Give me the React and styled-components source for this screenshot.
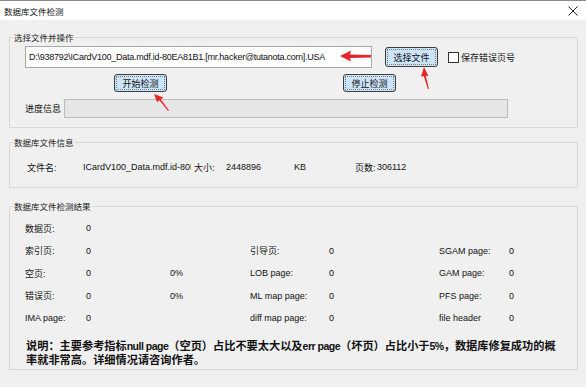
import React from 'react';
import styled, { createGlobalStyle } from 'styled-components';

const GlobalStyle = createGlobalStyle`
  html, body {
    margin: 0;
    padding: 0;
    background: #f0f0f0;
  }
  body {
    font-family: "Liberation Sans", "Noto Sans CJK SC", sans-serif;
    font-size: 9px;
    color: #111;
  }
`;

const Window = styled.div`
  position: relative;
  width: 586px;
  height: 387px;
  background: #f0f0f0;
  overflow: hidden;
  box-sizing: border-box;
`;

const TitleBar = styled.div`
  height: 20px;
  background: #fff;
  border-top: 1px solid #8a8a8a;
  box-sizing: border-box;
  display: flex;
  align-items: center;
  justify-content: space-between;
  padding: 1px 8px 0 4px;
  font-family: "Noto Sans CJK SC", sans-serif;
  font-size: 8.5px;
`;

const CloseIcon = () => (
  <svg width="10" height="10" viewBox="0 0 10 10">
    <path d="M0.5 0.5 L9.5 9.5 M9.5 0.5 L0.5 9.5" stroke="#222" strokeWidth="1" />
  </svg>
);

const Body = styled.div`
  padding: 10px 8px 0 9px;
  display: flex;
  flex-direction: column;
`;

const Group = styled.fieldset`
  margin: ${(p) => p.$top || 0}px 0 0 0;
  padding: ${(p) => p.$pt}px 0 ${(p) => p.$pb}px 0;
  border: 1px solid #d8d8d8;
  min-width: 0;
  box-sizing: border-box;
`;

const Legend = styled.legend`
  padding: 0 1px;
  margin-left: 3px;
  font-size: 8.5px;
  line-height: 14px;
  color: #222;
  font-family: "Noto Sans CJK SC", sans-serif;
`;

const Inner = styled.div`
  padding-left: ${(p) => p.$pl}px;
`;

const Row = styled.div`
  display: flex;
  align-items: center;
  height: ${(p) => p.$h}px;
  margin-top: ${(p) => p.$mt || 0}px;
  padding-left: ${(p) => p.$pl || 0}px;
`;

const PathInput = styled.div`
  width: 347px;
  height: 22px;
  box-sizing: border-box;
  background: #fff;
  border: 1px solid #a8a8a8;
  display: flex;
  align-items: center;
  padding-left: 3px;
  font-size: 9px;
  letter-spacing: -0.25px;
  white-space: nowrap;
  overflow: hidden;
`;

const Button = styled.div`
  width: ${(p) => p.$w || 53}px;
  height: ${(p) => p.$h || 18}px;
  box-sizing: border-box;
  background: #cce4f7;
  border: 1px solid #3c3c3c;
  border-radius: 3px;
  outline: 1px dotted #7a7a7a;
  outline-offset: -3px;
  display: flex;
  align-items: center;
  justify-content: center;
  margin-left: ${(p) => p.$ml || 0}px;
`;

const CheckLabel = styled.label`
  display: flex;
  align-items: center;
  gap: 2px;
  margin-left: 10px;
`;

const Box = styled.span`
  width: 11px;
  height: 11px;
  box-sizing: border-box;
  border: 1px solid #333;
  background: #fff;
`;

const Label = styled.span`
  width: ${(p) => p.$w}px;
  flex: none;
  white-space: nowrap;
`;

const Progress = styled.div`
  width: 444px;
  height: 19px;
  box-sizing: border-box;
  background: #e6e6e6;
  border: 1px solid #bcbcbc;
`;

const InfoGrid = styled.div`
  display: grid;
  grid-template-columns: 56px 111px 32px 68px 61px 22px auto;
  align-items: center;
  height: 14px;
  white-space: nowrap;
`;

const Clip = styled.span`
  display: block;
  width: 108px;
  overflow: hidden;
`;

const ResultGrid = styled.div`
  display: grid;
  grid-template-columns: 61px 84px 80px 79px 110px 70px auto;
  grid-auto-rows: 22.5px;
  align-items: center;
  white-space: nowrap;
`;

const Note = styled.div`
  margin-top: 9px;
  padding-left: 1px;
  font-family: "Noto Sans CJK SC", sans-serif;
  font-weight: 700;
  font-size: 11.2px;
  line-height: 13px;
  color: #111;
  white-space: nowrap;
`;

const Lat = styled.span`
  font-family: "Liberation Sans", sans-serif;
  font-size: 10.5px;
  letter-spacing: -0.5px;
`;

const Overlay = styled.svg`
  position: absolute;
  left: 0;
  top: 0;
  pointer-events: none;
`;

const results = [
  ['数据页:', '0', '', '', '', '', ''],
  ['索引页:', '0', '', '引导页:', '0', 'SGAM page:', '0'],
  ['空页:', '0', '0%', 'LOB page:', '0', 'GAM page:', '0'],
  ['错误页:', '0', '0%', 'ML map page:', '0', 'PFS page:', '0'],
  ['IMA page:', '0', '', 'diff map page:', '0', 'file header', '0'],
];

export default function App() {
  return (
    <>
      <GlobalStyle />
      <Window>
        <TitleBar>
          <span>数据库文件检测</span>
          <CloseIcon />
        </TitleBar>
        <Body>
          <Group $pt={2} $pb={9}>
            <Legend>选择文件并操作</Legend>
            <Inner $pl={15}>
              <Row $h={22}>
                <PathInput>D:\938792\ICardV100_Data.mdf.id-80EA81B1.[mr.hacker@tutanota.com].USA</PathInput>
                <Button $w={53} $h={20} $ml={13}>选择文件</Button>
                <CheckLabel>
                  <Box />
                  保存错误页号
                </CheckLabel>
              </Row>
              <Row $h={18} $mt={6} $pl={89}>
                <Button>开始检测</Button>
                <Button $ml={176}>停止检测</Button>
              </Row>
              <Row $h={19} $mt={7}>
                <Label $w={39}>进度信息</Label>
                <Progress />
              </Row>
            </Inner>
          </Group>

          <Group $top={7} $pt={11} $pb={13}>
            <Legend>数据库文件信息</Legend>
            <Inner $pl={17}>
              <InfoGrid>
                <span>文件名:</span>
                <Clip>ICardV100_Data.mdf.id-80EA81B1.[mr.hacker@tutanota.com].USA</Clip>
                <span>大小:</span>
                <span>2448896</span>
                <span>KB</span>
                <span>页数:</span>
                <span>306112</span>
              </InfoGrid>
            </Inner>
          </Group>

          <Group $top={11} $pt={4} $pb={3}>
            <Legend>数据库文件检测结果</Legend>
            <Inner $pl={15}>
              <ResultGrid>
                {results.map((row, i) =>
                  row.map((cell, j) => <span key={i + '-' + j}>{cell}</span>)
                )}
              </ResultGrid>
              <Note>
                <div>
                  说明：主要参考指标<Lat>null page</Lat>（空页）占比不要太大以及<Lat>err page</Lat>（坏页）占比小于<Lat>5%</Lat>，数据库修复成功的概
                </div>
                <div>率就非常高。详细情况请咨询作者。</div>
              </Note>
            </Inner>
          </Group>
        </Body>

        <Overlay width="586" height="387" viewBox="0 0 586 387">
          <path d="M340 56 L351 50.5 L350 54.5 L371 55 L371 57.5 L350 58 L351 61.5 Z" fill="#e8262a" />
          <path d="M424 67 L428.5 76 L425.8 75.8 L429 89 L428 89.2 L423.8 76.2 L421 76.6 Z" fill="#e8262a" />
          <path d="M154 94 L163.5 97.5 L160.8 99.3 L169 110.5 L168 111 L159.5 100.2 L157 102 Z" fill="#e8262a" />
        </Overlay>
      </Window>
    </>
  );
}
